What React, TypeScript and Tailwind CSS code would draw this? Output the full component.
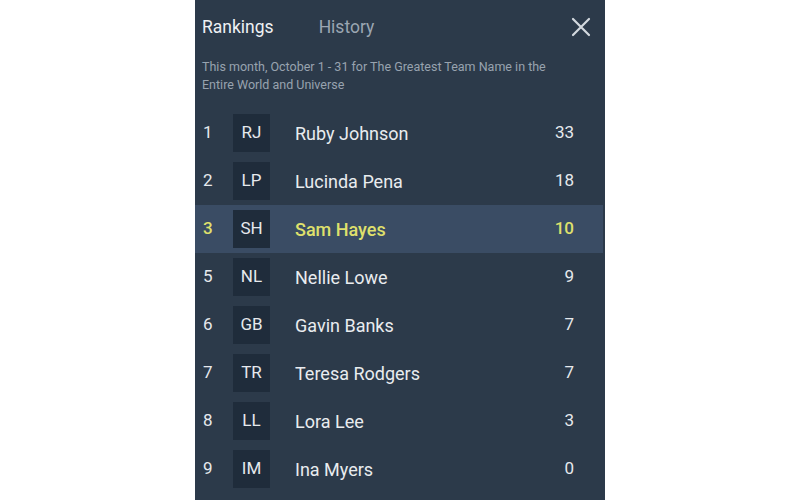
import React from "react";

const rows = [
  { rank: 1, ini: "RJ", name: "Ruby Johnson", score: 33 },
  { rank: 2, ini: "LP", name: "Lucinda Pena", score: 18 },
  { rank: 3, ini: "SH", name: "Sam Hayes", score: 10, me: true },
  { rank: 5, ini: "NL", name: "Nellie Lowe", score: 9 },
  { rank: 6, ini: "GB", name: "Gavin Banks", score: 7 },
  { rank: 7, ini: "TR", name: "Teresa Rodgers", score: 7 },
  { rank: 8, ini: "LL", name: "Lora Lee", score: 3 },
  { rank: 9, ini: "IM", name: "Ina Myers", score: 0 },
];

export default function App() {
  return (
    <div className="w-[800px] h-[500px] bg-white flex justify-center overflow-hidden" style={{ fontFamily: "Roboto, 'Liberation Sans', sans-serif" }}>
      <div className="w-[410px] h-[500px] bg-[#2c3a4a] flex flex-col">
        <div className="flex items-center pt-[16px] pl-[7px] pr-[14px] h-[38px]">
          <span className="text-[17.5px] leading-[22px] text-[#eef1f4]">Rankings</span>
          <span className="ml-[45px] text-[17.5px] leading-[22px] text-[#9ba6b2]">History</span>
          <svg className="ml-auto" width="20" height="20" viewBox="0 0 20 20" fill="none" stroke="#d4d9df" strokeWidth="2.2" strokeLinecap="round">
            <path d="M2 2 L18 18 M18 2 L2 18" />
          </svg>
        </div>
        <p className="mt-[20px] pl-[7px] w-[372px] text-[12.5px] leading-[18px] text-[#98a3af]">
          This month, October 1 - 31 for The Greatest Team Name in the Entire World and Universe
        </p>
        <div className="mt-[15px] flex flex-col">
          {rows.map((r) => (
            <div key={r.rank} className={`flex items-center h-[48px] pl-[8px] pr-[29px] mr-[2px] ${r.me ? "bg-[#3a4c64]" : ""}`}>
              <span className={`w-[30px] text-[17px] ${r.me ? "text-[#dfe06c] font-medium" : "text-[#e6e9ed]"}`}>{r.rank}</span>
              <div className="w-[37px] h-[38px] bg-[#1f2c3b] flex items-center justify-center text-[17px] text-[#e6e9ed]">{r.ini}</div>
              <span className={`ml-[25px] text-[18px] ${r.me ? "text-[#dfe06c] font-medium" : "text-[#e9ecef]"}`}>{r.name}</span>
              <span className={`ml-auto text-[17px] ${r.me ? "text-[#dfe06c] font-medium" : "text-[#e6e9ed]"}`}>{r.score}</span>
            </div>
          ))}
        </div>
      </div>
    </div>
  );
}
